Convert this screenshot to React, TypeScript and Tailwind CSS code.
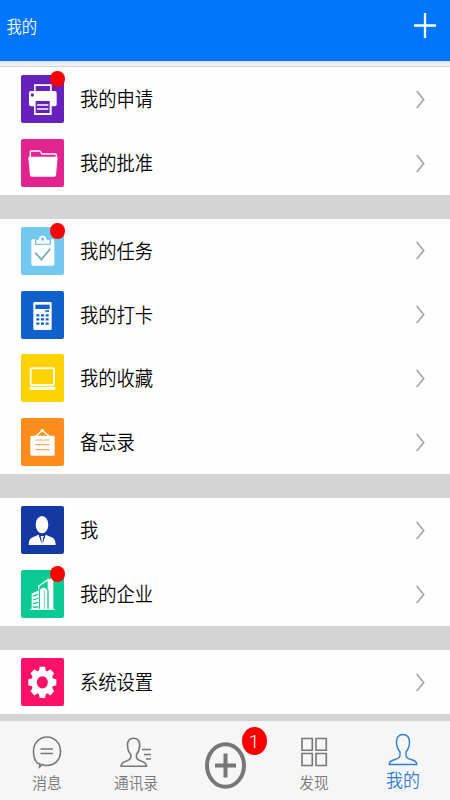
import type { ReactNode } from "react";

const W = "#ffffff";

const icons: Record<string, ReactNode> = {
  printer: (
    <>
      <path d="M41.500 51V30.500H89.500V51" fill="none" stroke={W} strokeWidth="5" />
      <rect x="24" y="48" width="83" height="46" rx="6" fill={W} />
      <circle cx="34" cy="60" r="5" fill="#6620bb" />
      <rect x="39" y="74" width="53" height="46" fill={W} />
      <rect x="44" y="78" width="42" height="36" fill="#6620bb" />
      <path d="M48 90H82M48 102H82" stroke={W} strokeWidth="5" />
    </>
  ),
  folder: (
    <>
      <path d="M28 58V38Q28 36 31 36H55Q58 36 60 40L63 45H103Q106 45 106 48V58" fill="none" stroke={W} strokeWidth="4" />
      <path d="M25 53H107Q110 53 110 56L105 109Q104 113 101 113H31Q28 113 27 109L22 56Q22 53 25 53Z" fill={W} />
    </>
  ),
  clipboard: (
    <>
      <rect x="31" y="37" width="69" height="79" rx="4" fill={W} />
      <path d="M44 52V41Q44 36 49 36H52Q52 24 65 24T78 36H82Q88 36 88 41V52Z" fill={W} stroke="#74c7ef" strokeWidth="4" />
      <circle cx="65" cy="36" r="5" fill="#74c7ef" />
      <path d="M43 77L61 98L88 65" fill="none" stroke="#6ba9cc" strokeWidth="5" />
    </>
  ),
  calculator: (
    <>
      <rect x="37" y="33" width="55" height="84" rx="4" fill={W} />
      <rect x="43" y="41" width="43" height="13" fill="#1160cc" />
      <path d="M73 60H84" stroke="#1160cc" strokeWidth="5" />
      <path d="M46 73H55M60 73H69M74 73H83M46 85H55M60 85H69M74 85H83M46 98H55M60 98H69M74 98H83" stroke="#1160cc" strokeWidth="7" />
    </>
  ),
  laptop: (
    <>
      <rect x="29" y="43" width="70" height="50" rx="3" fill="none" stroke="#fffce0" strokeWidth="6" />
      <path d="M26 98H103V104Q103 108 99 108H30Q26 108 26 104Z" fill="#fffce0" />
    </>
  ),
  memo: (
    <>
      <path d="M44 54L64 38L84 54" fill="none" stroke={W} strokeWidth="4" />
      <circle cx="64" cy="37" r="5" fill={W} />
      <rect x="28" y="53" width="73" height="60" rx="4" fill={W} />
      <path d="M43 66H86M43 80H86M43 95H86" stroke="#f5a85e" strokeWidth="3.500" />
    </>
  ),
  person: (
    <>
      <ellipse cx="63" cy="56" rx="19" ry="26" fill={W} />
      <path d="M23 117Q23 96 37 93L53 86L62 111L60 94L58 90H69L67 94L65 111L74 86L90 93Q104 96 104 117Z" fill={W} />
      <path d="M54 86L62 114L60 95L57 90ZM73 86L65 114L67 95L70 90Z" fill="#1539a3" />
    </>
  ),
  building: (
    <>
      <path d="M53 58V48L84 27" fill="none" stroke={W} strokeWidth="4" />
      <path d="M80 31L92 24Q97 22 97 27V117H83V60L80 57Z" fill={W} />
      <path d="M57 58L70 52L79 60V117H57Z" fill={W} />
      <path d="M32 118V71L54 60V118Z" fill={W} />
      <path d="M36 79L52 72M36 90L52 84M36 101L52 97M36 111H52" stroke="#0bc993" strokeWidth="4" />
      <path d="M70 62V116" stroke="#0bc993" strokeWidth="2" />
      <path d="M28 118H101" stroke={W} strokeWidth="3" />
    </>
  ),
  gear: (
    <g transform="translate(64 73) scale(1 1.12)">
      <g fill={W}>
        <circle r="33" />
        <path d="M-8 -42H8L11 -28V28L8 42H-8L-11 28V-28Z" />
        <path d="M-8 -42H8L11 -28V28L8 42H-8L-11 28V-28Z" transform="rotate(45)" />
        <path d="M-8 -42H8L11 -28V28L8 42H-8L-11 28V-28Z" transform="rotate(90)" />
        <path d="M-8 -42H8L11 -28V28L8 42H-8L-11 28V-28Z" transform="rotate(135)" />
      </g>
      <circle r="16.500" fill="#fb1268" />
    </g>
  ),
};

type Item = { label: string; icon: string; color: string; dot?: boolean };

const sections: { height: string; items: Item[] }[] = [
  {
    height: "h-[128px]",
    items: [
      { label: "我的申请", icon: "printer", color: "bg-[#6620bb]", dot: true },
      { label: "我的批准", icon: "folder", color: "bg-[#e3248f]" },
    ],
  },
  {
    height: "h-[255px]",
    items: [
      { label: "我的任务", icon: "clipboard", color: "bg-[#74c7ef]", dot: true },
      { label: "我的打卡", icon: "calculator", color: "bg-[#1160cc]" },
      { label: "我的收藏", icon: "laptop", color: "bg-[#fcd202]" },
      { label: "备忘录", icon: "memo", color: "bg-[#fc8d1c]" },
    ],
  },
  {
    height: "h-[128px]",
    items: [
      { label: "我", icon: "person", color: "bg-[#1539a3]" },
      { label: "我的企业", icon: "building", color: "bg-[#0bc993]", dot: true },
    ],
  },
  {
    height: "h-[64px]",
    items: [{ label: "系统设置", icon: "gear", color: "bg-[#fb1268]" }],
  },
];

function Row({ item }: { item: Item }) {
  return (
    <div className="flex min-h-0 flex-1 items-center pl-[21px] pr-[25px]">
      <div className={`relative h-12 w-[43px] shrink-0 rounded-[2px] ${item.color}`}>
        <svg className="block h-full w-full" viewBox="0 0 129 144" preserveAspectRatio="none">
          {icons[item.icon]}
        </svg>
        {item.dot && <span className="absolute -right-[0.500px] -top-1 h-4 w-[14.500px] rounded-[50%] bg-[#fb0000]" />}
      </div>
      <span className="mb-[2px] ml-[16px] flex-1 scale-y-[1.1] text-[18.300px] font-[350] leading-6 text-[#080808]">{item.label}</span>
      <svg className="h-[19px] w-[9px]" viewBox="0 0 9 19" fill="none" stroke="#aaaaaa" strokeWidth="1.900">
        <path d="M0.800 1L7.600 9.500L0.800 18" />
      </svg>
    </div>
  );
}

function Tab({ label, children }: { label: string; children: ReactNode }) {
  return (
    <div className="flex flex-col items-center pt-[14px] text-[#777777]">
      <svg className="h-[34px] w-[34px]" viewBox="0 0 34 34" fill="none" stroke="currentColor" strokeWidth="1.600">
        {children}
      </svg>
      <span className="mt-[3px] scale-y-[1.120] text-[14.700px] font-[350] leading-5">{label}</span>
    </div>
  );
}

export default function App() {
  return (
    <div className="flex h-[800px] w-[450px] flex-col overflow-hidden bg-[#d4d4d4] font-['Noto_Sans_CJK_SC',sans-serif]">
      <header className="flex h-[61px] shrink-0 items-start justify-between bg-[#0176fa] pl-[6.500px] pr-[14px] text-white">
        <span className="mt-[13px] scale-y-[1.100] text-[15.300px] font-[350] leading-6">我的</span>
        <svg className="mt-[13px] h-[25px] w-[22px]" viewBox="0 0 22 25" stroke="currentColor" strokeWidth="2.300">
          <path d="M11 0V25M0 12.500H22" />
        </svg>
      </header>
      <div className="h-[6px] shrink-0 border-b border-[#cfcfcf] bg-gradient-to-b from-[#dde0e4] to-[#f6f6f6]" />
      <main className="flex shrink-0 flex-col gap-6">
        {sections.map((s, i) => (
          <section key={i} className={`flex flex-col bg-[#fefefe] ${s.height}`}>
            {s.items.map((item) => (
              <Row key={item.label} item={item} />
            ))}
          </section>
        ))}
      </main>
      <nav className="mt-auto grid h-[79px] shrink-0 grid-cols-5 bg-[#f6f6f6] px-[2.500px]">
        <Tab label="消息">
          <path d="M7.500 28.300C5 25.700 3.500 21.500 3.500 16.500C3.500 8 9.500 2 17 2S30.500 8 30.500 16.500S24.500 30.500 17 30.500Q14.500 30.500 12.500 29.500L9.500 32L10 28.800Z" />
          <path d="M10.500 14H23M10.500 18.500H23" />
        </Tab>
        <Tab label="通讯录">
          <path d="M14.500 3.200C10.500 3.200 8.500 6 8.500 10C8.500 14 9.500 17 11.800 19.500V22C11.800 24 10.500 25 7.500 26C4 27 2 28 2 31.300H27.500C27.500 28 25.500 27 22 26C19 25 17.500 24 17.500 22V19.500C19.500 17 20.700 14 20.700 10C20.700 6 18.500 3.200 14.500 3.200Z" />
          <path d="M23 14.500H32M25 19.500H32M27 24H32" />
        </Tab>
        <div className="flex justify-center pt-[21px]">
          <div className="relative h-[47px] w-[41px]">
            <svg className="block h-full w-full" viewBox="0 0 41 47" fill="none" stroke="#777777" strokeWidth="4">
              <ellipse cx="20.500" cy="23.500" rx="18.500" ry="21.300" />
              <path d="M20.500 11.500V35.500M10 23.500H31" />
            </svg>
            <span className="absolute -right-[21px] -top-[15px] flex h-[28px] w-[25px] items-center justify-center rounded-[50%] bg-[#fb0000] font-['Roboto',sans-serif] text-[19px] font-light leading-none text-white">
              1
            </span>
          </div>
        </div>
        <Tab label="发现">
          <path d="M5 3.500H15.300V15.300H5ZM19 3.500H29.300V15.300H19ZM5 18.500H15.300V30.500H5ZM19 18.500H29.300V30.500H19Z" />
        </Tab>
        <div className="flex flex-col items-center pt-[11px] text-[#2f7dd6]">
          <svg className="h-[35px] w-[30px]" viewBox="0 0 30 35" fill="none" stroke="currentColor" strokeWidth="1.400">
            <path d="M15 2.500C11 2.500 8.500 5.500 8.500 10C8.500 14 9.500 17 12 20V23.500C12 25.500 10.500 26.500 7 27.500C3 28.700 1.300 29.500 1.300 32.500H28.700C28.700 29.500 27 28.700 23 27.500C19.500 26.500 18 25.500 18 23.500V20C20.500 17 21.500 14 21.500 10C21.500 5.500 19 2.500 15 2.500Z" />
          </svg>
          <span className="scale-y-[1.100] text-[17px] font-[350] leading-6">我的</span>
        </div>
      </nav>
    </div>
  );
}
